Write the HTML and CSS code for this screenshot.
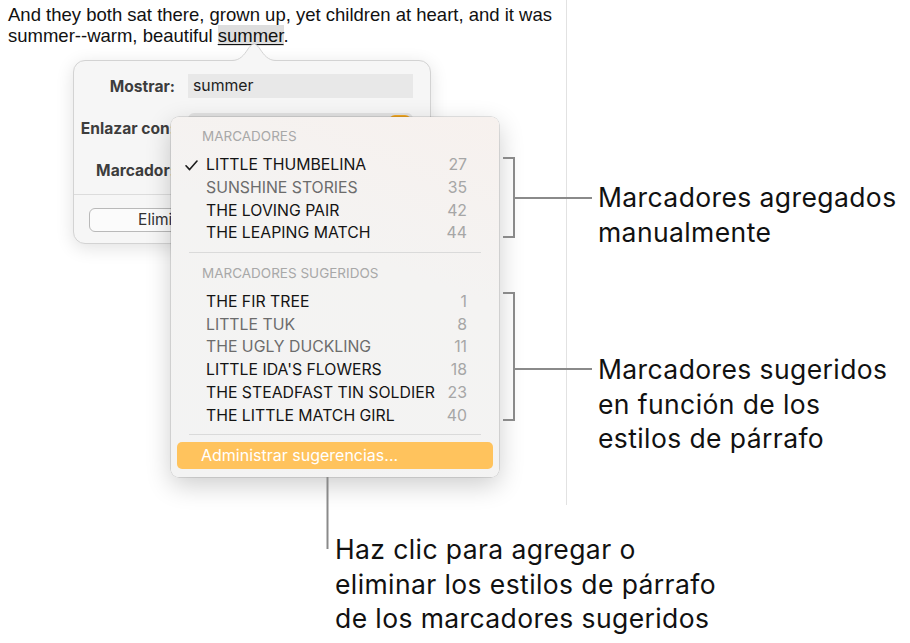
FILE: index.html
```html
<!DOCTYPE html>
<html lang="es">
<head>
<meta charset="utf-8">
<title>Marcadores</title>
<link rel="stylesheet" href="styles.css">
</head>
<body>
<div class="canvas">
  <p class="doc-text"><span class="line">And they both sat there, grown up, yet children at heart, and it was</span><span class="line">summer--warm, beautiful <span class="sel">summer</span>.</span></p>
  <div class="page-edge"></div>

  <div class="popover">
    <svg class="pointer" width="44" height="18" viewBox="0 0 44 18">
      <path class="pointer-fill" d="M0 17.5 C8 17.5 12 12 16 6 C19 1.5 21 1 22 1 C23 1 25 1.5 28 6 C32 12 36 17.5 44 17.5 L44 18 L0 18 Z"/>
      <path class="pointer-stroke" d="M0 17.5 C8 17.5 12 12 16 6 C19 1.5 21 1 22 1 C23 1 25 1.5 28 6 C32 12 36 17.5 44 17.5"/>
    </svg>
    <div class="form">
      <div class="label">Mostrar:</div>
      <div class="field">summer</div>
      <div class="label">Enlazar con:</div>
      <div class="popup"><span class="stepper"></span></div>
      <div class="label">Marcador:</div>
      <div class="popup"><span class="stepper"></span></div>
    </div>
    <div class="pop-sep"></div>
    <div class="pop-actions">
      <div class="button">Eliminar</div>
    </div>
  </div>

  <div class="menu">
    <div class="menu-head">MARCADORES</div>
    <div class="item"><svg class="check" width="13" height="11" viewBox="0 0 13 11"><path d="M1 5.8 L4.6 9.6 L12 1"/></svg><span>LITTLE THUMBELINA</span><span class="num">27</span></div>
    <div class="item dim"><span>SUNSHINE STORIES</span><span class="num">35</span></div>
    <div class="item"><span>THE LOVING PAIR</span><span class="num">42</span></div>
    <div class="item"><span>THE LEAPING MATCH</span><span class="num">44</span></div>
    <div class="menu-sep"></div>
    <div class="menu-head">MARCADORES SUGERIDOS</div>
    <div class="item"><span>THE FIR TREE</span><span class="num">1</span></div>
    <div class="item dim"><span>LITTLE TUK</span><span class="num">8</span></div>
    <div class="item dim"><span>THE UGLY DUCKLING</span><span class="num">11</span></div>
    <div class="item"><span>LITTLE IDA'S FLOWERS</span><span class="num">18</span></div>
    <div class="item"><span>THE STEADFAST TIN SOLDIER</span><span class="num">23</span></div>
    <div class="item"><span>THE LITTLE MATCH GIRL</span><span class="num">40</span></div>
    <div class="menu-sep sep-last"></div>
    <div class="menu-action">Administrar sugerencias...</div>
  </div>

  <svg class="leaders" width="910" height="643" viewBox="0 0 910 643">
    <path d="M503 158 H514 V237 H503"/>
    <path d="M514 198 H592"/>
    <path d="M503 293 H514 V420 H503"/>
    <path d="M514 369 H592"/>
    <path d="M327.5 477 V549"/>
  </svg>

  <div class="callout callout-1">Marcadores agregados<br>manualmente</div>
  <div class="callout callout-2">Marcadores sugeridos<br>en función de los<br>estilos de párrafo</div>
  <div class="callout callout-3">Haz clic para agregar o<br>eliminar los estilos de párrafo<br>de los marcadores sugeridos</div>
</div>
</body>
</html>
```

FILE: styles.css
```css
html, body {
  margin: 0;
  padding: 0;
  background: #ffffff;
}

.canvas {
  position: relative;
  width: 910px;
  height: 643px;
  overflow: hidden;
  font-family: Inter, "Liberation Sans", sans-serif;
  color: #111111;
}

.doc-text {
  margin: 0;
  padding: 4px 0 0 8px;
  font-family: "Liberation Sans", Arial, sans-serif;
  font-size: 18.5px;
  line-height: 21.2px;
  color: #111111;
}

.doc-text .line {
  display: block;
  white-space: nowrap;
}

.sel {
  background: #dedede;
  text-decoration: underline;
  text-underline-offset: 2px;
}

.page-edge {
  position: absolute;
  left: 566px;
  top: 0;
  width: 1px;
  height: 505px;
  background: #e2e2e2;
}

/* Popover */
.popover {
  position: absolute;
  left: 73px;
  top: 60px;
  width: 358px;
  box-sizing: border-box;
  border: 1px solid #d3d3d3;
  border-radius: 12px;
  background: #f6f6f6;
  box-shadow: 0 4px 18px rgba(0, 0, 0, 0.12);
  padding: 13px 0 11px 0;
}

.pointer {
  position: absolute;
  left: 158px;
  top: -18px;
  display: block;
}

.pointer-fill {
  fill: #f6f6f6;
}

.pointer-stroke {
  fill: none;
  stroke: #d3d3d3;
  stroke-width: 1;
}

.form {
  display: grid;
  grid-template-columns: 101px 225px;
  grid-auto-rows: 24px;
  column-gap: 13px;
  row-gap: 18px;
  align-items: center;
}

.label {
  text-align: right;
  font-size: 15.6px;
  font-weight: 700;
  color: #3d3d3d;
  white-space: nowrap;
}

.field {
  height: 24px;
  line-height: 24px;
  background: #e8e8e8;
  padding-left: 5px;
  font-size: 15.8px;
  color: #1e1e1e;
}

.popup {
  position: relative;
  height: 30px;
  border-radius: 6px;
  background: #e2e2e2;
}

.stepper {
  position: absolute;
  right: 2px;
  top: 2px;
  width: 22px;
  height: 26px;
  border-radius: 6px;
  background: #f2a824;
}

.pop-sep {
  height: 1px;
  background: #dcdcdc;
  margin-top: 12px;
}

.pop-actions {
  display: flex;
  padding-left: 15px;
  margin-top: 13px;
}

.button {
  width: 156px;
  height: 24px;
  box-sizing: border-box;
  border: 1px solid #b9b9b9;
  border-radius: 6px;
  background: #fbfbfb;
  font-size: 15.5px;
  line-height: 22px;
  text-align: center;
  color: #333333;
}

/* Menu */
.menu {
  position: absolute;
  left: 171px;
  top: 117px;
  width: 328px;
  box-sizing: border-box;
  padding: 8px 0;
  border-radius: 8px;
  background: linear-gradient(200deg, #f7f1ee 0%, #f4f3f2 40%, #f3f3f3 100%);
  box-shadow: 0 0 0 0.5px rgba(0, 0, 0, 0.2), 0 8px 26px rgba(0, 0, 0, 0.2);
}

.menu-head {
  height: 22px;
  line-height: 22px;
  padding-left: 31px;
  margin-bottom: 6.5px;
  font-size: 13.5px;
  color: #a8a8a8;
  white-space: nowrap;
}

.item {
  position: relative;
  display: flex;
  align-items: center;
  height: 22.7px;
  padding: 0 32px 0 35px;
  font-size: 15.8px;
  color: #141414;
  white-space: nowrap;
}

.item.dim {
  color: #6c6c6c;
}

.num {
  margin-left: auto;
  color: #a6a6a6;
}

.check {
  position: absolute;
  left: 14px;
  top: 6px;
}

.check path {
  fill: none;
  stroke: #1b1b1b;
  stroke-width: 1.6;
  stroke-linecap: round;
  stroke-linejoin: round;
}

.menu-sep {
  height: 1px;
  background: #dadada;
  margin: 8px 18px 8.5px;
}

.menu-sep.sep-last {
  margin: 8px 18px 7px;
}

.menu-action {
  margin: 0 6px;
  height: 27px;
  line-height: 27px;
  padding-left: 24px;
  border-radius: 5px;
  background: #ffc35d;
  color: #ffffff;
  font-size: 16px;
  white-space: nowrap;
}

/* Leader lines and callouts */
.leaders {
  position: absolute;
  left: 0;
  top: 0;
  display: block;
}

.leaders path {
  fill: none;
  stroke: #8a8a8a;
  stroke-width: 2;
}

.callout {
  position: absolute;
  font-size: 26.5px;
  letter-spacing: 0.4px;
  line-height: 34.5px;
  color: #111111;
  white-space: nowrap;
}

.callout-1 {
  left: 598px;
  top: 180px;
}

.callout-2 {
  left: 598px;
  top: 352px;
}

.callout-3 {
  left: 335px;
  top: 532px;
}
```
